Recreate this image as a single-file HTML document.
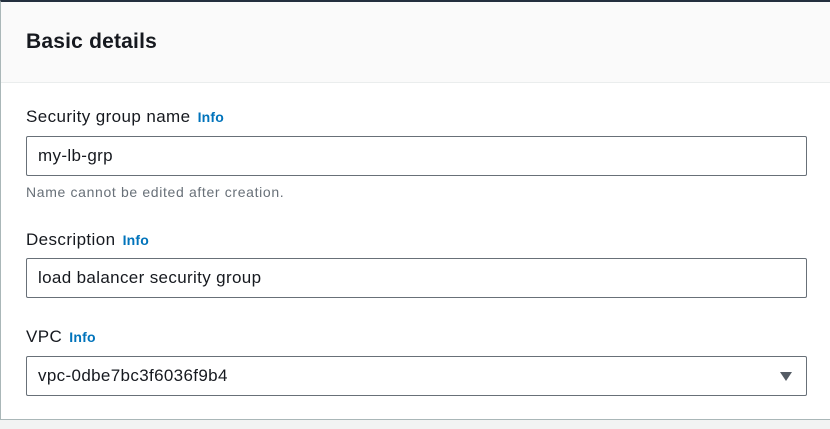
<!DOCTYPE html>
<html><head><style>
body{margin:0;width:830px;height:429px;background:#f2f3f3;font-family:"Liberation Sans",sans-serif;overflow:hidden;position:relative}
.panel{position:absolute;left:0;top:0;width:830px;height:420px;background:#fff;border-top:2px solid #232f3e;border-left:1px solid #aab7b8;border-bottom:1px solid #aab7b8;box-sizing:border-box}
.hdr{position:absolute;left:0;top:0;right:0;height:80px;background:#fafafa;border-bottom:1px solid #eaeded}
h2{position:absolute;left:25px;top:28px;margin:0;font-size:21px;font-weight:bold;color:#16191f;letter-spacing:0.2px}
.lbl{position:absolute;left:25px;font-size:17px;letter-spacing:0.4px;color:#16191f}
.lbl b{color:#0073bb;font-size:14px;font-weight:bold;margin-left:2px;letter-spacing:0.2px}
.inp{position:absolute;left:25px;width:781px;height:40px;border:1px solid #687078;border-radius:2px;box-sizing:border-box;padding-left:11px;line-height:38px;font-size:17px;letter-spacing:0.35px;color:#16191f}
.help{position:absolute;left:25px;top:182px;font-size:14px;letter-spacing:0.65px;color:#687078}
.arr{position:absolute;right:14px;top:15px;width:0;height:0;border-left:6px solid transparent;border-right:6px solid transparent;border-top:9px solid #545b64}
</style></head><body>
<div class="panel">
<div class="hdr"><h2>Basic details</h2></div>
<div class="lbl" style="top:105px">Security group name <b>Info</b></div>
<div class="inp" style="top:134px">my-lb-grp</div>
<div class="help">Name cannot be edited after creation.</div>
<div class="lbl" style="top:228px">Description <b>Info</b></div>
<div class="inp" style="top:256px">load balancer security group</div>
<div class="lbl" style="top:325px">VPC <b>Info</b></div>
<div class="inp" style="top:354px">vpc-0dbe7bc3f6036f9b4<div class="arr"></div></div>
</div>
</body></html>
